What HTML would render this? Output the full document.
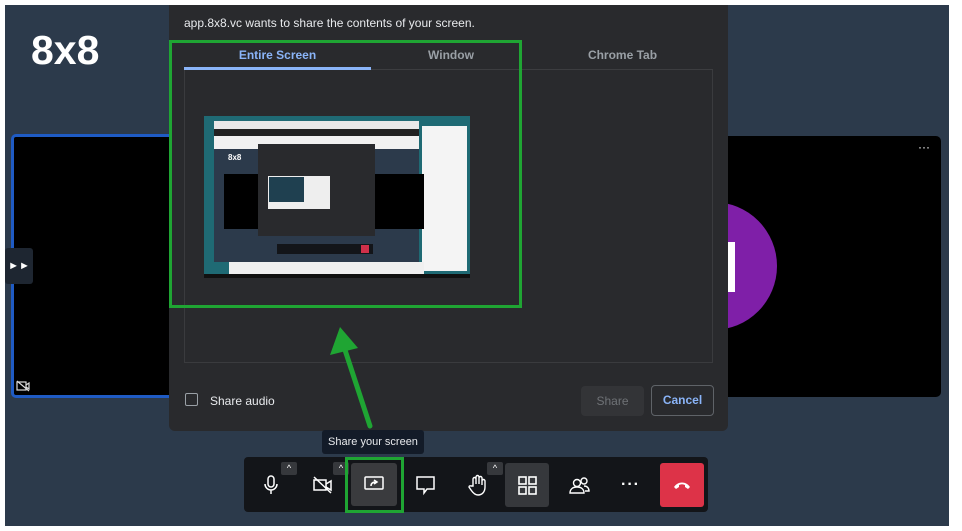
<!DOCTYPE html>
<html><head><meta charset="utf-8"><style>
*{box-sizing:border-box;margin:0;padding:0}
body{width:962px;height:531px;background:#fff;position:relative;overflow:hidden;font-family:"Liberation Sans",sans-serif}
.abs{position:absolute}
</style></head><body>
<div class="abs" style="left:5px;top:5px;width:944px;height:521px;background:#2c3a4b"></div>
<div class="abs" style="left:31px;top:27px;color:#fff;font-weight:bold;font-size:41px;letter-spacing:0">8x8</div>
<!-- left tile -->
<div class="abs" style="left:11px;top:134px;width:170px;height:264px;background:#000;border:3px solid #1f5bc4;border-radius:5px"></div>
<div class="abs" style="left:5px;top:248px;width:28px;height:36px;background:#1e2631;border-radius:3px;color:#fff;font-size:11px;line-height:36px;text-align:center">&#9658;&#9658;</div>
<svg class="abs" style="left:16px;top:380px" width="14" height="12" viewBox="0 0 14 12"><rect x="1" y="2" width="9" height="8" fill="none" stroke="#ddd" stroke-width="1.2"/><path d="M10 5l3-2v6l-3-2M1 1l12 10" stroke="#ddd" fill="none" stroke-width="1.2"/></svg>
<!-- right tile -->
<div class="abs" style="left:700px;top:136px;width:241px;height:261px;background:#000;border-radius:5px;overflow:hidden">
<div class="abs" style="left:-51px;top:66px;width:128px;height:128px;border-radius:50%;background:#7f1fa8"></div>
<div class="abs" style="left:28px;top:106px;width:7px;height:50px;background:#fff"></div>
<div class="abs" style="left:218px;top:4px;color:#fff;font-size:12px">&middot;&middot;&middot;</div>
</div>
<!-- dialog -->
<div class="abs" style="left:169px;top:5px;width:559px;height:426px;background:#292a2d;border-radius:0 0 6px 6px"></div>
<div class="abs" style="left:184px;top:16px;color:#e8eaed;font-size:12px">app.8x8.vc wants to share the contents of your screen.</div>
<div class="abs" style="left:184px;top:48px;width:187px;text-align:center;color:#8ab4f8;font-size:12px;font-weight:bold">Entire Screen</div>
<div class="abs" style="left:371px;top:48px;width:160px;text-align:center;color:#9aa0a6;font-size:12px;font-weight:bold">Window</div>
<div class="abs" style="left:535px;top:48px;width:175px;text-align:center;color:#9aa0a6;font-size:12px;font-weight:bold">Chrome Tab</div>
<div class="abs" style="left:184px;top:67px;width:187px;height:3px;background:#8ab4f8"></div>
<div class="abs" style="left:371px;top:69px;width:342px;height:1px;background:#3c3d40"></div>
<div class="abs" style="left:184px;top:70px;width:529px;height:293px;border:1px solid #3a3b3e;border-top:none"></div>
<!-- thumbnail -->
<div class="abs" style="left:204px;top:116px;width:266px;height:162px;background:#1f6a74;overflow:hidden">
<div class="abs" style="left:10px;top:5px;width:205px;height:8px;background:#e8e8e8"></div>
<div class="abs" style="left:10px;top:13px;width:205px;height:7px;background:#222"></div>
<div class="abs" style="left:10px;top:20px;width:205px;height:13px;background:#f1f1f1"></div>
<div class="abs" style="left:10px;top:33px;width:205px;height:113px;background:#2c3a4b"></div>
<div class="abs" style="left:218px;top:10px;width:45px;height:145px;background:#f4f4f4"></div>
<div class="abs" style="left:20px;top:58px;width:200px;height:55px;background:#000"></div>
<div class="abs" style="left:54px;top:28px;width:117px;height:92px;background:#292a2d"></div>
<div class="abs" style="left:64px;top:60px;width:62px;height:33px;background:#eee"></div>
<div class="abs" style="left:65px;top:61px;width:35px;height:25px;background:#1f4050"></div>
<div class="abs" style="left:73px;top:128px;width:96px;height:10px;background:#131519"></div>
<div class="abs" style="left:157px;top:129px;width:8px;height:8px;background:#d0304a"></div>
<div class="abs" style="left:25px;top:146px;width:195px;height:12px;background:#f0f0f0"></div>
<div class="abs" style="left:0;top:158px;width:266px;height:4px;background:#111"></div>
<div class="abs" style="left:24px;top:37px;color:#fff;font-size:8px;font-weight:bold">8x8</div>
</div>
<!-- green box -->
<div class="abs" style="left:169px;top:40px;width:353px;height:268px;border:3px solid #1fa533"></div>
<!-- bottom dialog -->
<div class="abs" style="left:185px;top:393px;width:13px;height:13px;border:1.5px solid #9aa0a6;border-radius:2px"></div>
<div class="abs" style="left:210px;top:394px;color:#e8eaed;font-size:12px">Share audio</div>
<div class="abs" style="left:581px;top:386px;width:63px;height:30px;background:#333437;border-radius:4px;color:#6f7276;font-size:12px;line-height:30px;text-align:center">Share</div>
<div class="abs" style="left:651px;top:385px;width:63px;height:31px;border:1px solid #5f6368;border-radius:4px;color:#8ab4f8;font-size:12px;line-height:29px;text-align:center;font-weight:bold">Cancel</div>
<!-- arrow -->
<svg class="abs" style="left:320px;top:320px" width="70" height="110"><path d="M50 106L25 30" stroke="#1fa533" stroke-width="5" stroke-linecap="round"/><path d="M20 7L10 35L38 28Z" fill="#1fa533"/></svg>
<!-- tooltip -->
<div class="abs" style="left:322px;top:430px;width:102px;height:24px;background:#131b28;border-radius:3px;color:#e8eaed;font-size:11px;line-height:24px;text-align:center">Share your screen</div>
<!-- toolbar -->
<div class="abs" style="left:244px;top:457px;width:464px;height:55px;background:#131519;border-radius:4px"></div>
<div class="abs" style="left:281px;top:462px;width:16px;height:13px;background:#36383c;border-radius:2px;color:#fff;font-size:9px;text-align:center;line-height:13px">&#94;</div>
<div class="abs" style="left:333px;top:462px;width:16px;height:13px;background:#36383c;border-radius:2px;color:#fff;font-size:9px;text-align:center;line-height:13px">&#94;</div>
<div class="abs" style="left:487px;top:462px;width:16px;height:13px;background:#36383c;border-radius:2px;color:#fff;font-size:9px;text-align:center;line-height:13px">&#94;</div>
<svg class="abs" style="left:262px;top:475px" width="18" height="20"><rect x="6" y="1" width="6" height="11" rx="3" fill="none" stroke="#fff" stroke-width="1.5"/><path d="M3 9a6 6 0 0012 0M9 15v4" fill="none" stroke="#fff" stroke-width="1.5"/></svg>
<svg class="abs" style="left:313px;top:476px" width="20" height="18"><rect x="1" y="4" width="12" height="10" fill="none" stroke="#fff" stroke-width="1.5"/><path d="M13 8l5-3v9l-5-3M1 1l17 16" fill="none" stroke="#fff" stroke-width="1.5"/></svg>
<div class="abs" style="left:351px;top:463px;width:46px;height:43px;background:#3a3b3e;border-radius:3px"></div>
<svg class="abs" style="left:364px;top:476px" width="20" height="16"><rect x="1" y="1" width="18" height="12" rx="1" fill="none" stroke="#fff" stroke-width="1.5"/><path d="M7 10c0-3 2-4 5-4M10 4l3 2-3 2" fill="none" stroke="#fff" stroke-width="1.5"/></svg>
<div class="abs" style="left:345px;top:457px;width:59px;height:56px;border:3px solid #1fa533"></div>
<svg class="abs" style="left:416px;top:476px" width="20" height="20"><path d="M1 1h17v12h-7l-3 4v-4H1z" fill="none" stroke="#fff" stroke-width="1.5"/></svg>
<svg class="abs" style="left:468px;top:474px" width="20" height="22"><path d="M5 12V5a1.3 1.3 0 013 0v5V3a1.3 1.3 0 013 0v7V4a1.3 1.3 0 013 0v7V7a1.3 1.3 0 013 0v6c0 5-3 8-7 8-3 0-5-2-7-5l-2-3a1.3 1.3 0 012-1z" fill="none" stroke="#fff" stroke-width="1.4"/></svg>
<div class="abs" style="left:505px;top:463px;width:44px;height:44px;background:#36383c;border-radius:3px"></div>
<svg class="abs" style="left:518px;top:476px" width="19" height="19"><g fill="none" stroke="#fff" stroke-width="1.6"><rect x="1" y="1" width="7" height="7"/><rect x="11" y="1" width="7" height="7"/><rect x="1" y="11" width="7" height="7"/><rect x="11" y="11" width="7" height="7"/></g></svg>
<svg class="abs" style="left:569px;top:476px" width="21" height="18"><g fill="none" stroke="#fff" stroke-width="1.4"><circle cx="8" cy="7" r="3.5"/><path d="M1 17c0-4 3-6 7-6s7 2 7 6z"/><circle cx="15" cy="5" r="3"/><path d="M15 10c3 0 5 2 5 5h-4"/></g></svg>
<div class="abs" style="left:621px;top:476px;color:#fff;font-size:16px;font-weight:bold;letter-spacing:1px">&middot;&middot;&middot;</div>
<div class="abs" style="left:660px;top:463px;width:44px;height:44px;background:#dd3348;border-radius:3px"></div>
<svg class="abs" style="left:672px;top:480px" width="20" height="10"><path d="M2 7c4-6 12-6 16 0l-2 2-3-2v-2c-2-1-4-1-6 0v2l-3 2z" fill="#fff"/></svg>
</body></html>
